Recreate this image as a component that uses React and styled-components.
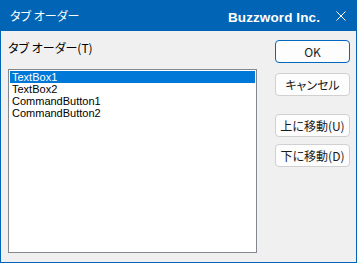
import React from "react";
import styled, { createGlobalStyle } from "styled-components";

const Global = createGlobalStyle`
  html, body { margin: 0; padding: 0; background: #f0f0f0; }
  * { box-sizing: border-box; }
`;

const JP = `"Noto Sans CJK JP", "Noto Sans", sans-serif`;

const Window = styled.div`
  width: 357px;
  height: 263px;
  border: 1px solid #0164b4;
  background: #f0f0f0;
  display: flex;
  flex-direction: column;
`;

const TitleBar = styled.div`
  height: 30px;
  background: #0164b4;
  color: #fff;
  display: flex;
  align-items: center;
  padding-left: 9px;
  padding-right: 10px;
`;

const Title = styled.span`
  font-family: ${JP};
  font-size: 12px;
  font-feature-settings: "palt";
  flex: 1;
  margin-top: -1px;
`;

const Brand = styled.span`
  font-family: "Liberation Sans", Arial, sans-serif;
  font-weight: bold;
  font-size: 13.5px;
  letter-spacing: 0.1px;
  margin-right: 16px;
  margin-top: 3px;
`;

const CloseIcon = styled.svg`
  width: 10px;
  height: 10px;
  display: block;
`;

const Body = styled.div`
  flex: 1;
  display: flex;
  padding: 9px 5px 9px 7px;
  gap: 18px;
`;

const LeftCol = styled.div`
  display: flex;
  flex-direction: column;
  width: 249px;
`;

const Label = styled.div`
  font-family: ${JP};
  font-size: 12px;
  font-feature-settings: "palt";
  line-height: 14px;
  height: 14px;
  color: #000;
  margin-top: 1px;
`;

const ListBox = styled.div`
  margin-top: 14px;
  height: 184px;
  border: 1px solid #828790;
  background: #fff;
  padding: 1px 1px;
`;

const Item = styled.div`
  font-family: "Liberation Sans", Arial, sans-serif;
  font-size: 11px;
  line-height: 12px;
  height: 12px;
  padding-left: 2px;
  color: ${(p) => (p.$selected ? "#fff" : "#000")};
  background: ${(p) => (p.$selected ? "#0078d7" : "transparent")};
  white-space: nowrap;
`;

const RightCol = styled.div`
  display: flex;
  flex-direction: column;
  width: 75px;
`;

const Button = styled.button`
  width: 75px;
  height: 23px;
  margin-top: ${(p) => p.$mt || 0}px;
  padding: 0;
  background: #fdfdfd;
  border: 1px solid ${(p) => (p.$default ? "#0067c0" : "#d0d0d0")};
  border-radius: 4px;
  font-family: ${JP};
  font-feature-settings: "palt";
  font-size: 12px;
  line-height: 20px;
  color: #1a1a1a;
  display: flex;
  align-items: center;
  justify-content: center;
`;

const items = ["TextBox1", "TextBox2", "CommandButton1", "CommandButton2"];

export default function App() {
  return (
    <>
      <Global />
      <Window>
        <TitleBar>
          <Title>タブ オーダー</Title>
          <Brand>Buzzword Inc.</Brand>
          <CloseIcon viewBox="0 0 10 10">
            <path d="M0.5 0.5 L9.5 9.5 M9.5 0.5 L0.5 9.5" stroke="#fff" strokeWidth="1" fill="none" />
          </CloseIcon>
        </TitleBar>
        <Body>
          <LeftCol>
            <Label>タブ オーダー(T)</Label>
            <ListBox>
              {items.map((t, i) => (
                <Item key={t} $selected={i === 0}>
                  {t}
                </Item>
              ))}
            </ListBox>
          </LeftCol>
          <RightCol>
            <Button $default>OK</Button>
            <Button $mt={10}>キャンセル</Button>
            <Button $mt={18}>上に移動(U)</Button>
            <Button $mt={7}>下に移動(D)</Button>
          </RightCol>
        </Body>
      </Window>
    </>
  );
}
